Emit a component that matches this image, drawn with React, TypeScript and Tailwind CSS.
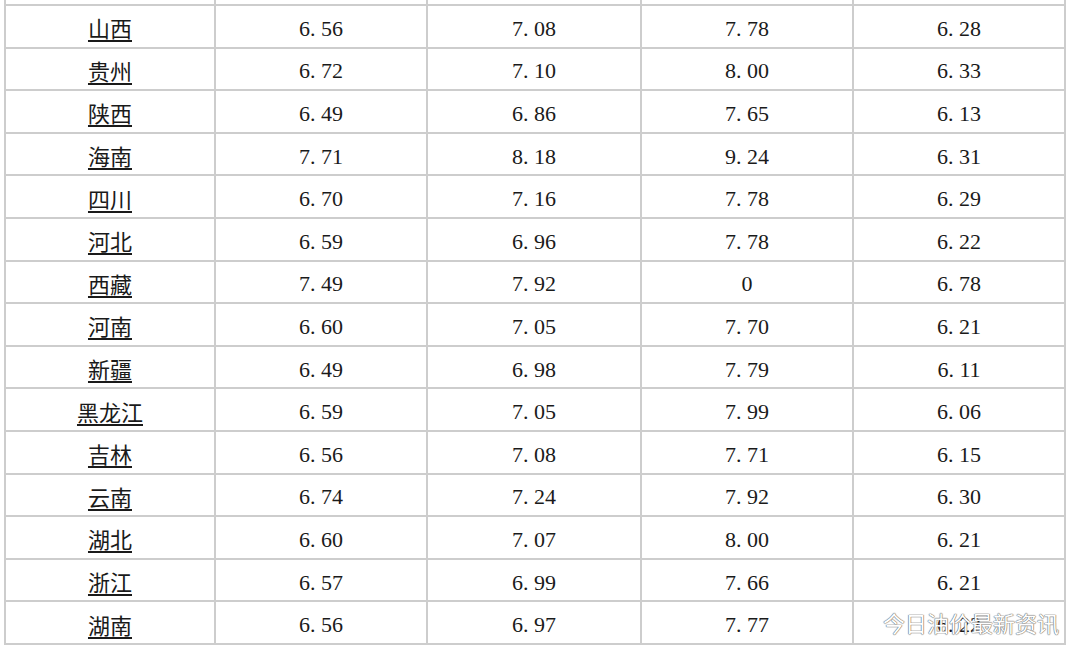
const rows: [string, string, string, string, string][] = [
  ['山西', '6.56', '7.08', '7.78', '6.28'],
  ['贵州', '6.72', '7.10', '8.00', '6.33'],
  ['陕西', '6.49', '6.86', '7.65', '6.13'],
  ['海南', '7.71', '8.18', '9.24', '6.31'],
  ['四川', '6.70', '7.16', '7.78', '6.29'],
  ['河北', '6.59', '6.96', '7.78', '6.22'],
  ['西藏', '7.49', '7.92', '0', '6.78'],
  ['河南', '6.60', '7.05', '7.70', '6.21'],
  ['新疆', '6.49', '6.98', '7.79', '6.11'],
  ['黑龙江', '6.59', '7.05', '7.99', '6.06'],
  ['吉林', '6.56', '7.08', '7.71', '6.15'],
  ['云南', '6.74', '7.24', '7.92', '6.30'],
  ['湖北', '6.60', '7.07', '8.00', '6.21'],
  ['浙江', '6.57', '6.99', '7.66', '6.21'],
  ['湖南', '6.56', '6.97', '7.77', '6.22'],
]

function Num({ value }: { value: string }) {
  const [a, b] = value.split('.')
  return (
    <span className="font-['Liberation_Serif',serif] text-[22px] text-[#1a1a1a] leading-none">
      {a}
      {b !== undefined && (
        <>
          <span className="inline-block w-[11px] text-left">.</span>
          {b}
        </>
      )}
    </span>
  )
}

function App() {
  return (
    <div className="relative w-[1070px] h-[651px] bg-white overflow-hidden">
      <div className="ml-[4px] w-[1062px] h-[645px] bg-[#cdcdcd] px-[2px] pb-[2px] grid grid-cols-[208px_210px_212px_210px_210px] grid-rows-[4px_repeat(15,minmax(0,1fr))] gap-[2px]">
        {Array.from({ length: 5 }).map((_, i) => (
          <div key={'top' + i} className="bg-white" />
        ))}
        {rows.map((r) => (
          <div key={r[0]} className="contents">
            <div className="bg-white flex items-center justify-center pt-[2px]">
              <span className="font-['Noto_Sans_CJK_SC',sans-serif] text-[22px] text-[#1a1a1a] leading-none underline underline-offset-[3px] decoration-[1.5px]">
                {r[0]}
              </span>
            </div>
            {r.slice(1).map((v, j) => (
              <div key={j} className="bg-white flex items-center justify-center pt-[5px]">
                <Num value={v} />
              </div>
            ))}
          </div>
        ))}
      </div>
      <div className="absolute left-[883px] top-[611px] font-['Noto_Sans_CJK_SC',sans-serif] text-[22px] leading-none text-white [text-shadow:0_0_1px_#6b6b6b,0_0_1px_#6b6b6b,0_0_1px_#6b6b6b]">
        今日油价最新资讯
      </div>
    </div>
  )
}

export default App
